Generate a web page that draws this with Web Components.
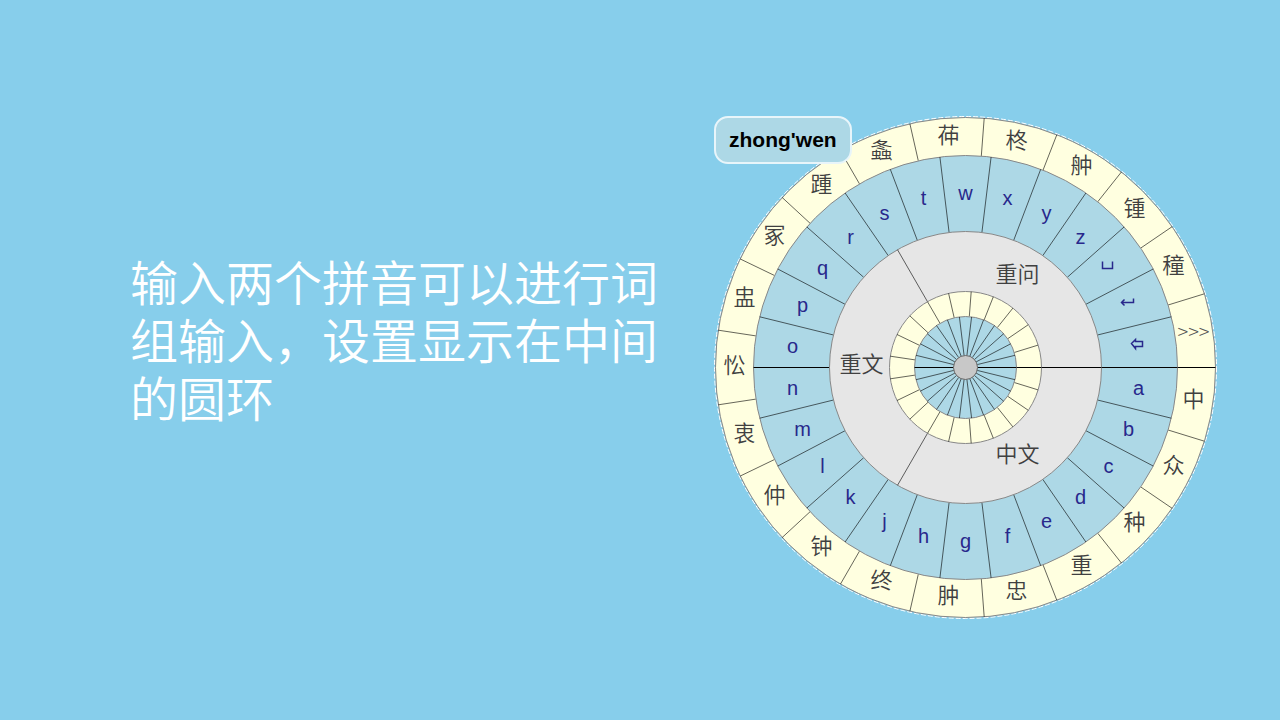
<!DOCTYPE html>
<html lang="zh-CN">
<head>
<meta charset="utf-8">
<meta name="viewport" content="width=device-width, initial-scale=1">
<title>拼音转盘</title>
<style>
body { margin: 0; background: #87ceeb; font-family: "Noto Sans CJK SC", sans-serif; }
</style>
</head>
<body>
<slide-page>
  <slide-caption slot="caption">输入两个拼音可以进行词组输入，设置显示在中间的圆环</slide-caption>
  <pinyin-wheel slot="figure"
    letters="a b c d e f g h j k l m n o p q r s t w x y z @space @enter @back"
    candidates="中 众 种 重 忠 肿 终 钟 仲 衷 忪 盅 冢 踵 螽 茽 柊 舯 锺 穜 &gt;&gt;&gt;"
    phrases="中文 重文 重问"><pinyin-chip>zhong'wen</pinyin-chip></pinyin-wheel>
</slide-page>
<script>
class BaseElement extends HTMLElement {
  constructor() {
    super();
    this.attachShadow({ mode: 'open' });
  }
}

customElements.define('slide-page', class extends BaseElement {
  connectedCallback() {
    this.shadowRoot.innerHTML = `
      <style>
        :host { display: block; }
        main {
          box-sizing: border-box; min-height: 100vh;
          display: flex; align-items: center; justify-content: center;
          gap: 55px; padding: 15px 0 0 67px;
        }
        ::slotted([slot=caption]) { flex: 0 1 529px; }
        ::slotted([slot=figure]) { flex: 0 1 503px; }
      </style>
      <main><slot name="caption"></slot><slot name="figure"></slot></main>`;
  }
});

customElements.define('slide-caption', class extends BaseElement {
  connectedCallback() {
    this.shadowRoot.innerHTML = `
      <style>
        :host { display: block; padding-bottom: 60px; }
        h1 { margin: 0; color: #fff; font-weight: 350; font-size: 48px; line-height: 58px; }
      </style>
      <h1><slot></slot></h1>`;
  }
});

customElements.define('pinyin-chip', class extends BaseElement {
  connectedCallback() {
    this.shadowRoot.innerHTML = `
      <style>
        :host {
          display: block; box-sizing: border-box; padding: 0 13px;
          border: 2px solid #e8f5fa; border-radius: 14px; background: #add8e6;
          color: #000; font: bold 21px/44px "Liberation Sans", sans-serif;
        }
      </style>
      <slot></slot>`;
  }
});

customElements.define('pinyin-wheel', class extends BaseElement {
  // Radii, from the rim to the hub
  static R = { rim: 250, letters: 212, phrases: 136, miniRim: 76, miniLetters: 51, hub: 12 };
  static ICONS = {
    '@space': ['空格', 'M-5 -4V3H5V-4'],
    '@enter': ['回车', 'M6 -4V0H-6M-3 -3L-6 0L-3 3'],
    '@back': ['退格', 'M-6 0L-2 -4V-2H5V3H-2V5Z']
  };
  // Distance from a cell's centre to the baseline of its label
  static BASELINE = { candidate: 5, phrase: 4, letter: 6 };

  point(radius, turn) {
    const a = turn * 2 * Math.PI;
    return [radius * Math.cos(a), radius * Math.sin(a)].map(v => Math.round(v * 10) / 10);
  }

  spokes(count, inner, outer) {
    return Array.from({ length: count }, (_, i) => {
      const [x1, y1] = this.point(inner, i / count);
      const [x2, y2] = this.point(outer, i / count);
      const flat = y1 === 0 && y2 === 0 ? ' class="flat"' : '';
      return `<line${flat} x1="${x1}" y1="${y1}" x2="${x2}" y2="${y2}"/>`;
    }).join('');
  }

  labels(items, radius, kind) {
    return items.map((item, i) => {
      const [x, y] = this.point(radius, (i + 0.5) / items.length);
      const icon = this.constructor.ICONS[item];
      if (icon) {
        return `<path class="icon" role="img" aria-label="${icon[0]}" transform="translate(${Math.round(x) - 1} ${Math.round(y) - 3})" d="${icon[1]}"/>`;
      }
      const safe = item.replace(/>/g, '&gt;');
      const cls = item.startsWith('>') ? 'more' : kind;
      return `<text class="${cls}" x="${Math.round(x)}" y="${Math.round(y) + this.constructor.BASELINE[kind]}">${safe}</text>`;
    }).join('');
  }

  connectedCallback() {
    const R = this.constructor.R;
    const list = name => this.getAttribute(name).split(' ');
    const letters = list('letters'), candidates = list('candidates'), phrases = list('phrases');
    this.shadowRoot.innerHTML = `
      <style>
        :host { display: block; position: relative; }
        svg { display: block; width: 100%; height: auto; }
        circle { stroke: #888; }
        .outer { fill: #ffffe0; }
        .inner { fill: #add8e6; }
        .middle { fill: #e6e6e6; }
        .hub { fill: #c8c8c8; stroke: #666; }
        .edge { fill: none; stroke: #fff; stroke-dasharray: 5 2; }
        line { stroke: #000; stroke-opacity: .6; }
        line.flat { stroke-opacity: 1; }
        text { text-anchor: middle; }
        .letter { fill: #28288c; font: 20px "Liberation Sans", sans-serif; }
        .candidate, .phrase { fill: #404040; font: 350 22px "Noto Sans CJK SC", sans-serif; }
        .more { fill: #555; font: 300 20px "Noto Sans CJK SC", sans-serif; }
        .icon { fill: none; stroke: #28288c; stroke-width: 1.5; }
        slot { position: absolute; left: 0; top: 0; display: block; }
      </style>
      <svg viewBox="-251.5 -251.5 503 503">
        <circle class="edge" r="${R.rim + 1}"/>
        <circle class="outer" r="${R.rim}"/>
        ${this.spokes(candidates.length, R.letters, R.rim)}
        <circle class="inner" r="${R.letters}"/>
        ${this.spokes(letters.length, R.phrases, R.letters)}
        <circle class="middle" r="${R.phrases}"/>
        ${this.spokes(phrases.length, R.miniRim, R.phrases)}
        <circle class="outer" r="${R.miniRim}"/>
        ${this.spokes(candidates.length, R.miniLetters, R.miniRim)}
        <circle class="inner" r="${R.miniLetters}"/>
        ${this.spokes(letters.length, R.hub, R.miniLetters)}
        <circle class="hub" r="${R.hub}"/>
        ${this.labels(candidates, 231, 'candidate')}
        ${this.labels(letters, 174, 'letter')}
        ${this.labels(phrases, 104, 'phrase')}
      </svg>
      <slot></slot>`;
  }
});
</script>
</body>
</html>
